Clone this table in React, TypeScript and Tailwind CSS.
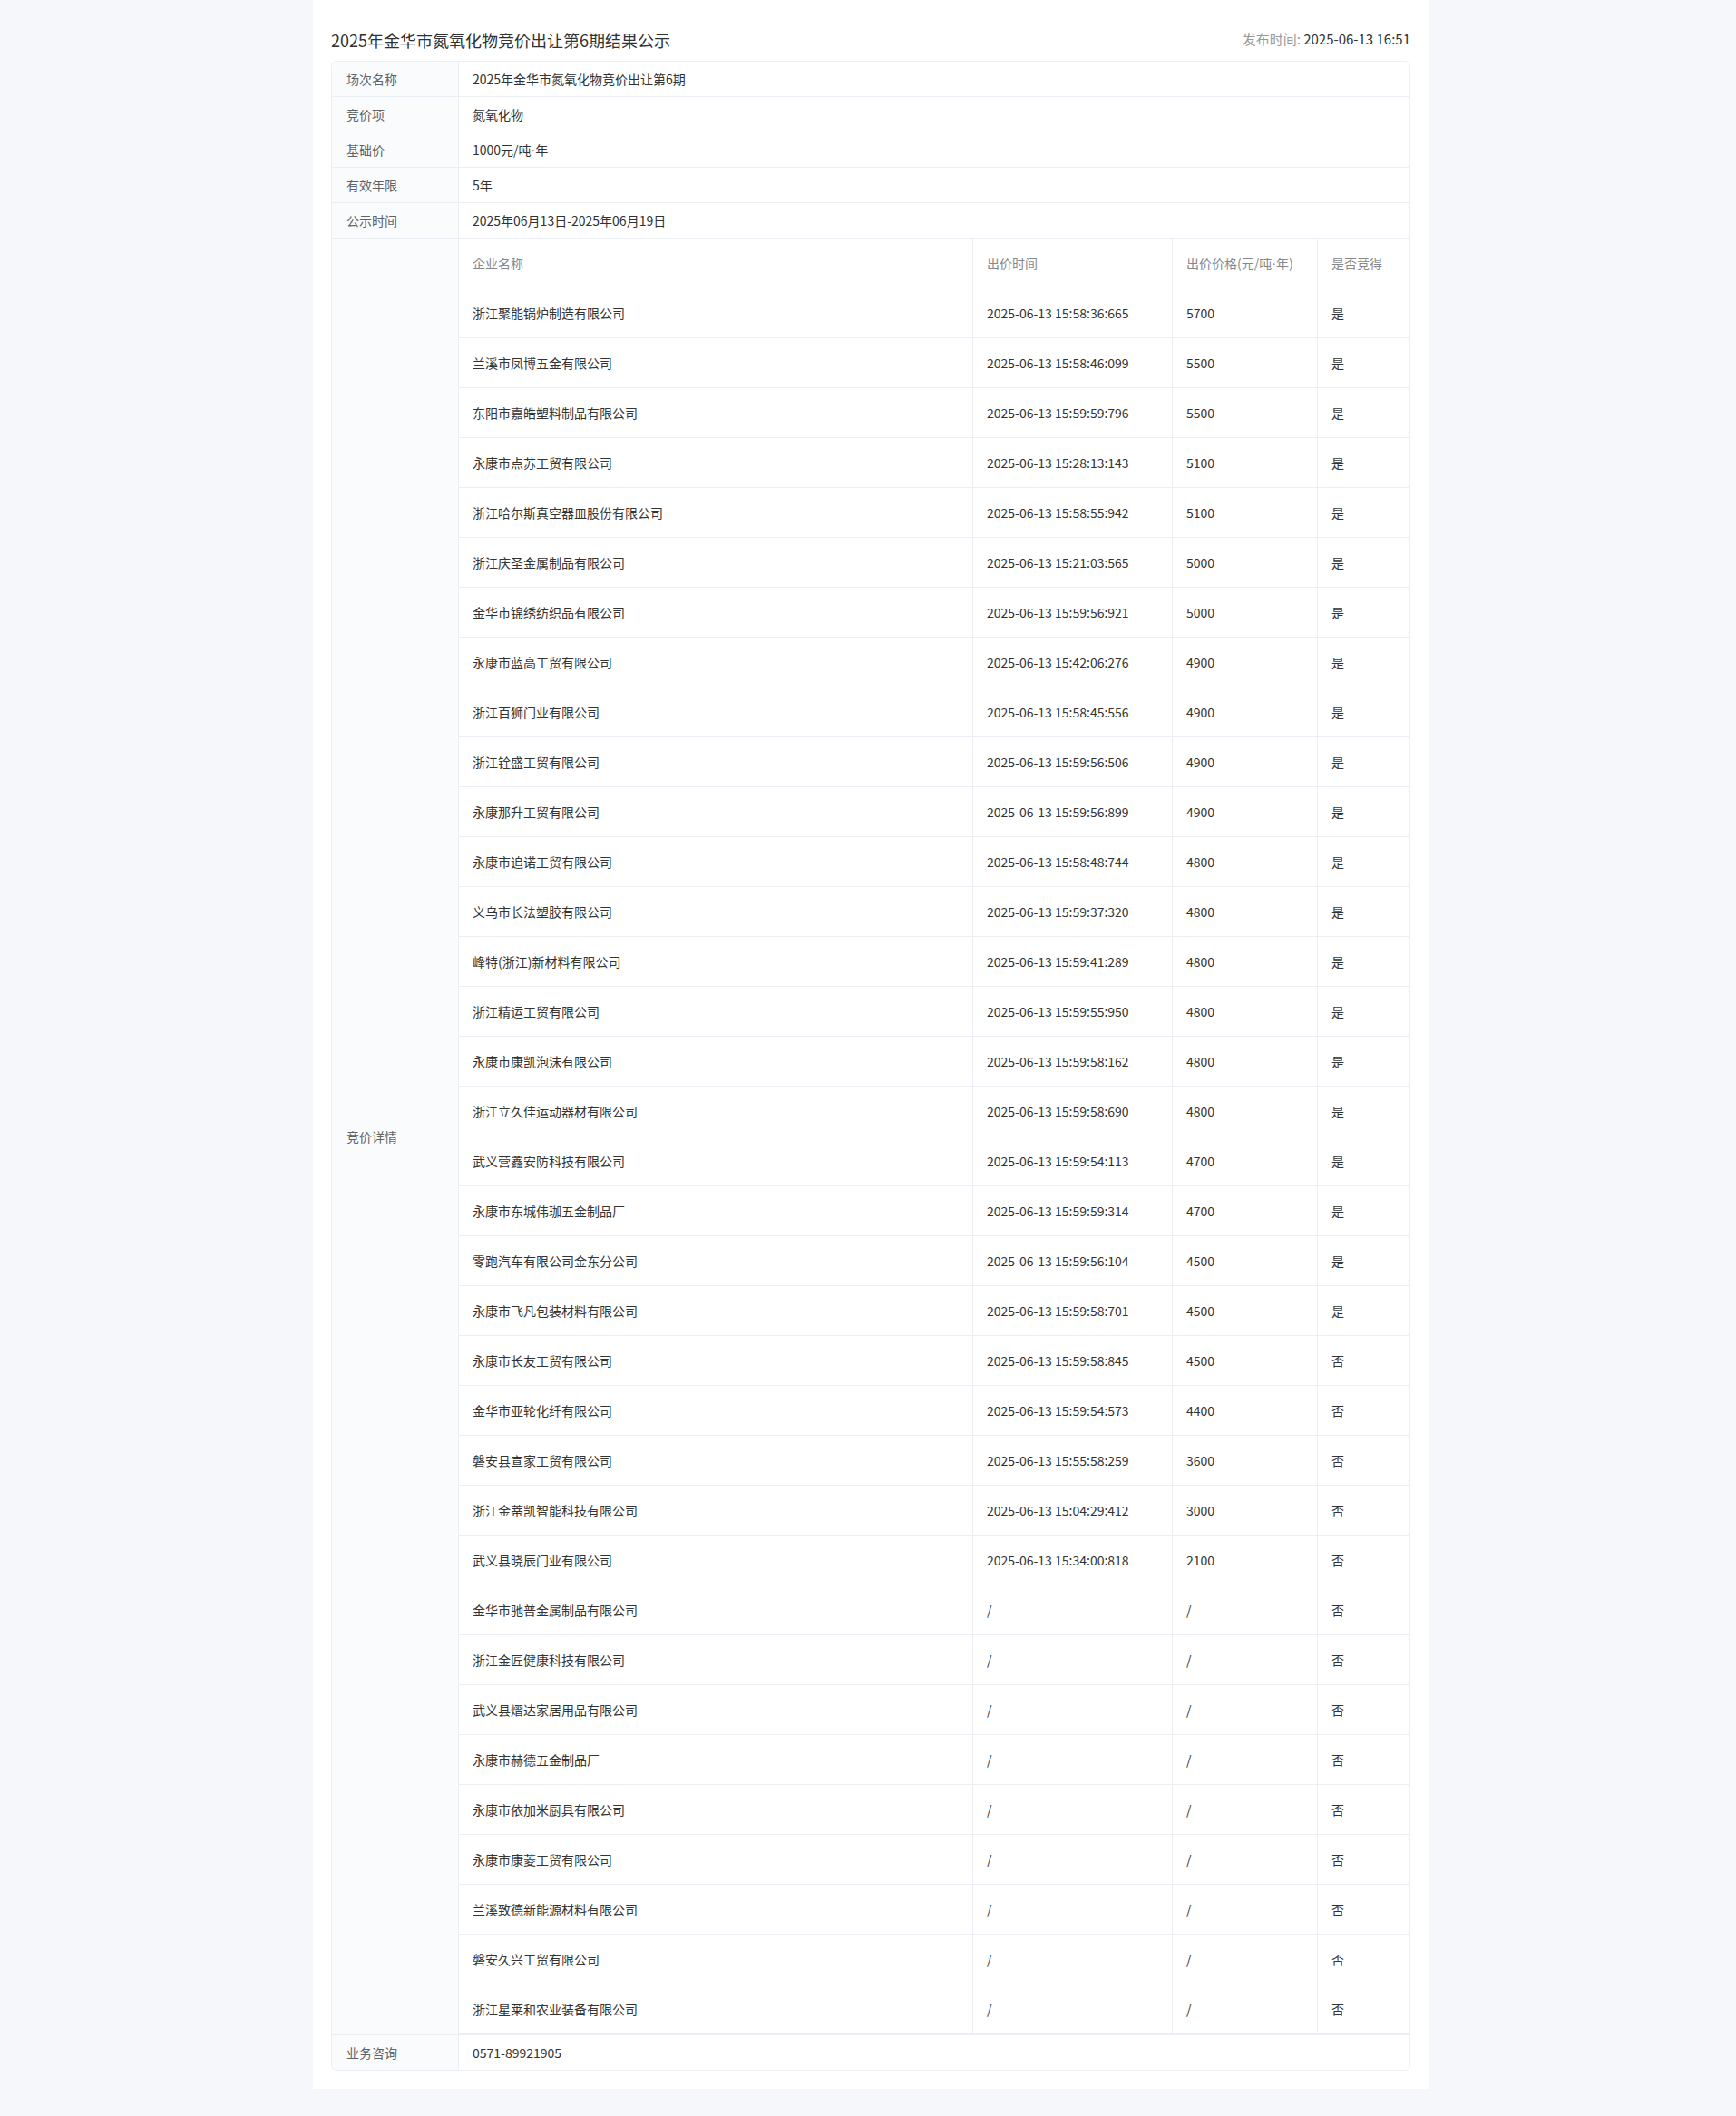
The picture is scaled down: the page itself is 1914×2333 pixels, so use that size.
const FONT = { fontFamily: '"Noto Sans CJK SC", "Noto Sans", sans-serif' };

// 中间点用西文字体，避免全角宽度
const Dot = () => <span style={{ fontFamily: '"Liberation Sans", sans-serif' }}>·</span>;

// 场次基础信息
const info: [string, React.ReactNode][] = [
  ["场次名称", "2025年金华市氮氧化物竞价出让第6期"],
  ["竞价项", "氮氧化物"],
  ["基础价", <>1000元/吨<Dot />年</>],
  ["有效年限", "5年"],
  ["公示时间", "2025年06月13日-2025年06月19日"],
];

// 企业名称, 出价时间, 出价价格, 是否竞得
const bids: [string, string, string, string][] = [
  ["浙江聚能锅炉制造有限公司", "2025-06-13 15:58:36:665", "5700", "是"],
  ["兰溪市凤博五金有限公司", "2025-06-13 15:58:46:099", "5500", "是"],
  ["东阳市嘉皓塑料制品有限公司", "2025-06-13 15:59:59:796", "5500", "是"],
  ["永康市点苏工贸有限公司", "2025-06-13 15:28:13:143", "5100", "是"],
  ["浙江哈尔斯真空器皿股份有限公司", "2025-06-13 15:58:55:942", "5100", "是"],
  ["浙江庆圣金属制品有限公司", "2025-06-13 15:21:03:565", "5000", "是"],
  ["金华市锦绣纺织品有限公司", "2025-06-13 15:59:56:921", "5000", "是"],
  ["永康市蓝高工贸有限公司", "2025-06-13 15:42:06:276", "4900", "是"],
  ["浙江百狮门业有限公司", "2025-06-13 15:58:45:556", "4900", "是"],
  ["浙江铨盛工贸有限公司", "2025-06-13 15:59:56:506", "4900", "是"],
  ["永康那升工贸有限公司", "2025-06-13 15:59:56:899", "4900", "是"],
  ["永康市追诺工贸有限公司", "2025-06-13 15:58:48:744", "4800", "是"],
  ["义乌市长法塑胶有限公司", "2025-06-13 15:59:37:320", "4800", "是"],
  ["峰特(浙江)新材料有限公司", "2025-06-13 15:59:41:289", "4800", "是"],
  ["浙江精运工贸有限公司", "2025-06-13 15:59:55:950", "4800", "是"],
  ["永康市康凯泡沫有限公司", "2025-06-13 15:59:58:162", "4800", "是"],
  ["浙江立久佳运动器材有限公司", "2025-06-13 15:59:58:690", "4800", "是"],
  ["武义营鑫安防科技有限公司", "2025-06-13 15:59:54:113", "4700", "是"],
  ["永康市东城伟珈五金制品厂", "2025-06-13 15:59:59:314", "4700", "是"],
  ["零跑汽车有限公司金东分公司", "2025-06-13 15:59:56:104", "4500", "是"],
  ["永康市飞凡包装材料有限公司", "2025-06-13 15:59:58:701", "4500", "是"],
  ["永康市长友工贸有限公司", "2025-06-13 15:59:58:845", "4500", "否"],
  ["金华市亚轮化纤有限公司", "2025-06-13 15:59:54:573", "4400", "否"],
  ["磐安县宣家工贸有限公司", "2025-06-13 15:55:58:259", "3600", "否"],
  ["浙江金蒂凯智能科技有限公司", "2025-06-13 15:04:29:412", "3000", "否"],
  ["武义县晓辰门业有限公司", "2025-06-13 15:34:00:818", "2100", "否"],
  ["金华市驰普金属制品有限公司", "/", "/", "否"],
  ["浙江金匠健康科技有限公司", "/", "/", "否"],
  ["武义县熠达家居用品有限公司", "/", "/", "否"],
  ["永康市赫德五金制品厂", "/", "/", "否"],
  ["永康市依加米厨具有限公司", "/", "/", "否"],
  ["永康市康菱工贸有限公司", "/", "/", "否"],
  ["兰溪致德新能源材料有限公司", "/", "/", "否"],
  ["磐安久兴工贸有限公司", "/", "/", "否"],
  ["浙江星莱和农业装备有限公司", "/", "/", "否"],
];

const headers: React.ReactNode[] = [
  "企业名称",
  "出价时间",
  <>出价价格(元/吨<Dot />年)</>,
  "是否竞得",
];

function LabelCell({ children }: { children: React.ReactNode }) {
  return (
    <div className="flex w-[140px] shrink-0 items-center border-r border-[#ebeef5] bg-[#fafbfc] px-4 text-[14px] text-[#606266]">
      {children}
    </div>
  );
}

export default function App() {
  return (
    <div className="min-h-[2333px] bg-[#f6f7fb]" style={FONT}>
      <div className="ml-[345px] w-[1230px] bg-white px-5 pb-[20px]">
        {/* 标题 */}
        <div className="flex h-[67px] items-center justify-between pt-[20px]">
          <h1 className="text-[18px] leading-[24px] font-normal text-[#303133]">
            2025年金华市氮氧化物竞价出让第6期结果公示
          </h1>
          <div className="text-[15px] text-[#303133]">
            <span className="text-[#999]">发布时间: </span>2025-06-13 16:51
          </div>
        </div>

        {/* 公示表格 */}
        <div className="overflow-hidden rounded-md border border-[#ebeef5] text-[14px] leading-none">
          {info.map(([k, v]) => (
            <div key={k} className="flex h-[39px] border-b border-[#ebeef5]">
              <LabelCell>{k}</LabelCell>
              <div className="flex flex-1 items-center px-[15px] text-[#303133]">{v}</div>
            </div>
          ))}

          {/* 竞价详情 */}
          <div className="flex border-b border-[#ebeef5]">
            <LabelCell>竞价详情</LabelCell>
            <div className="grid flex-1 grid-cols-[567px_220px_160px_1fr]">
              {headers.map((h, i) => (
                <div
                  key={"h" + i}
                  className="flex h-[55px] items-center border-r border-b border-[#ebeef5] px-[15px] text-[#86888c]"
                >
                  {h}
                </div>
              ))}
              {bids.map((row) =>
                row.map((c, i) => (
                  <div
                    key={row[0] + i}
                    className="flex h-[55px] items-center border-r border-b border-[#ebeef5] px-[15px] text-[#333]"
                  >
                    {c}
                  </div>
                ))
              )}
            </div>
          </div>

          <div className="flex h-[38px]">
            <LabelCell>业务咨询</LabelCell>
            <div className="flex flex-1 items-center px-[15px] text-[#303133]">0571-89921905</div>
          </div>
        </div>
      </div>

      {/* 页脚分隔线 */}
      <div className="mt-[24px] h-[6px] border-t border-[#e4e7ed]" />
    </div>
  );
}
